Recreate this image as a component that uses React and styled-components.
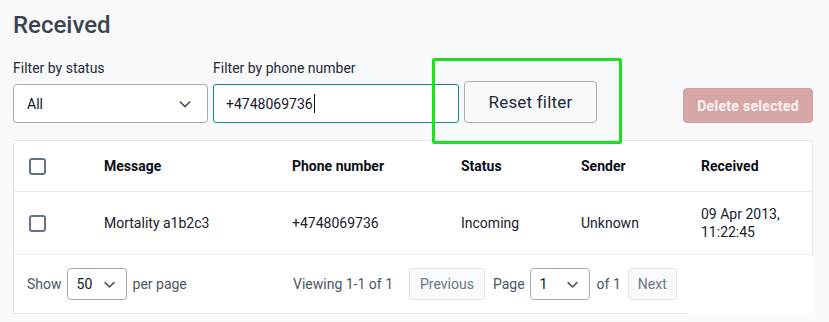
import React from "react";
import styled, { createGlobalStyle } from "styled-components";

const Global = createGlobalStyle`
  html, body { margin: 0; padding: 0; background: #f8f9fb; }
  body { font-family: Roboto, "Liberation Sans", sans-serif; color: #1f2937; }
  * { box-sizing: border-box; }
`;

const Page = styled.div`
  position: relative;
  width: 829px;
  height: 322px;
  padding: 11px 16px 0 13px;
  overflow: hidden;
`;

const Title = styled.h1`
  margin: 0;
  font-size: 24px;
  line-height: 28px;
  font-weight: 500;
  color: #3b4450;
`;

const FilterBar = styled.div`
  display: flex;
  align-items: flex-end;
  gap: 5px;
  margin-top: 21px;
`;

const Field = styled.div`
  display: flex;
  flex-direction: column;
  gap: 8px;
`;

const Label = styled.div`
  font-size: 14px;
  line-height: 16px;
  color: #1f2937;
`;

const SelectBox = styled.div`
  display: flex;
  align-items: center;
  justify-content: space-between;
  width: ${(p) => p.$w}px;
  height: ${(p) => p.$h}px;
  padding: 0 ${(p) => p.$pr}px 0 ${(p) => p.$pl}px;
  background: #fff;
  border: 1px solid #a3aab4;
  border-radius: 4px;
  font-size: 14px;
  color: #111827;
`;

const TextField = styled.div`
  display: flex;
  align-items: center;
  width: 246px;
  height: 39px;
  padding: 0 12px;
  background: #fff;
  border: 1px solid #14897d;
  border-radius: 3px;
  font-size: 14px;
  color: #111827;
`;

const Caret = styled.span`
  display: inline-block;
  width: 1px;
  height: 19px;
  margin-left: 1px;
  background: #111;
`;

const ResetButton = styled.button`
  width: 133px;
  height: 42px;
  background: #f7f9fb;
  border: 1px solid #a7b0ba;
  border-radius: 4px;
  font-family: inherit;
  font-size: 17px;
  letter-spacing: 0.2px;
  color: #1f2937;
`;

const DeleteButton = styled.button`
  margin-left: auto;
  width: 130px;
  height: 35px;
  background: #d7a6a6;
  border: 1px solid #cfa0a0;
  border-radius: 4px;
  font-family: inherit;
  font-size: 14px;
  font-weight: 700;
  letter-spacing: 0.3px;
  color: #fdf4f4;
`;

const Highlight = styled.div`
  position: absolute;
  left: 432px;
  top: 58px;
  width: 190px;
  height: 86px;
  border: 3px solid #1fe01f;
  border-radius: 2px;
  pointer-events: none;
`;

const Card = styled.div`
  margin-top: 17px;
  width: 800px;
  background: #fff;
`;

const Table = styled.div`
  border: 1px solid #e6e9ee;
  border-bottom: none;
`;

const Row = styled.div`
  display: grid;
  grid-template-columns: 74px 188px 169px 120px 120px 1fr;
  align-items: center;
  height: ${(p) => p.$h}px;
  border-bottom: 1px solid #e6e9ee;
`;

const Cell = styled.div`
  padding: 0 16px;
  font-size: 14px;
  line-height: 18px;
  font-weight: ${(p) => (p.$head ? 700 : 400)};
  color: ${(p) => (p.$head ? "#0b0f19" : "#1a202c")};
`;

const CheckCell = styled.div`
  padding-left: 15px;
  display: flex;
  align-items: center;
`;

const Checkbox = styled.span`
  display: block;
  width: 17px;
  height: 17px;
  border: 2px solid #667385;
  border-radius: 3px;
  background: #fff;
`;

const Footer = styled.div`
  display: flex;
  align-items: center;
  width: 676px;
  height: 59px;
  padding-left: 13px;
  border-left: 1px solid #e6e9ee;
  border-bottom: 1px solid #e6e9ee;
  font-size: 14px;
  color: #4b5563;
`;

const Group = styled.div`
  display: flex;
  align-items: center;
  flex: ${(p) => (p.$w ? `0 0 ${p.$w}px` : "0 0 auto")};
`;

const Text = styled.span`
  margin: 0 ${(p) => p.$mr || 0}px 0 ${(p) => p.$ml || 0}px;
`;

const PageButton = styled.button`
  height: 32px;
  padding: 0 ${(p) => p.$px}px;
  background: #f8fafc;
  border: 1px solid #dfe4ea;
  border-radius: 4px;
  font-family: inherit;
  font-size: 14px;
  color: #6b7787;
`;

const Chevron = ({ size = 14 }) => (
  <svg width={size} height={size} viewBox="0 0 24 24" fill="none" stroke="#4b5563" strokeWidth="2.6" strokeLinecap="round" strokeLinejoin="round">
    <path d="M5 9l7 7 7-7" />
  </svg>
);

export default function App() {
  return (
    <>
      <Global />
      <Page>
        <Title>Received</Title>
        <FilterBar>
          <Field>
            <Label>Filter by status</Label>
            <SelectBox $w={195} $h={39} $pl={13} $pr={14}>
              <span>All</span>
              <Chevron size={16} />
            </SelectBox>
          </Field>
          <Field>
            <Label>Filter by phone number</Label>
            <TextField>
              +4748069736
              <Caret />
            </TextField>
          </Field>
          <ResetButton>Reset filter</ResetButton>
          <DeleteButton>Delete selected</DeleteButton>
        </FilterBar>
        <Card>
          <Table>
            <Row $h={51}>
              <CheckCell><Checkbox /></CheckCell>
              <Cell $head>Message</Cell>
              <Cell $head>Phone number</Cell>
              <Cell $head>Status</Cell>
              <Cell $head>Sender</Cell>
              <Cell $head>Received</Cell>
            </Row>
            <Row $h={63}>
              <CheckCell><Checkbox /></CheckCell>
              <Cell>Mortality a1b2c3</Cell>
              <Cell>+4748069736</Cell>
              <Cell>Incoming</Cell>
              <Cell>Unknown</Cell>
              <Cell>09 Apr 2013,<br />11:22:45</Cell>
            </Row>
          </Table>
          <Footer>
            <Group $w={266}>
              <Text $mr={5}>Show</Text>
              <SelectBox $w={60} $h={32} $pl={9} $pr={9}>
                <span>50</span>
                <Chevron size={15} />
              </SelectBox>
              <Text $ml={6}>per page</Text>
            </Group>
            <Group>
              <Text $mr={16}>Viewing 1-1 of 1</Text>
              <PageButton $px={10}>Previous</PageButton>
              <Text $ml={8} $mr={5}>Page</Text>
              <SelectBox $w={60} $h={32} $pl={9} $pr={9}>
                <span>1</span>
                <Chevron size={15} />
              </SelectBox>
              <Text $ml={7} $mr={7}>of 1</Text>
              <PageButton $px={9}>Next</PageButton>
            </Group>
          </Footer>
        </Card>
        <Highlight />
      </Page>
    </>
  );
}
